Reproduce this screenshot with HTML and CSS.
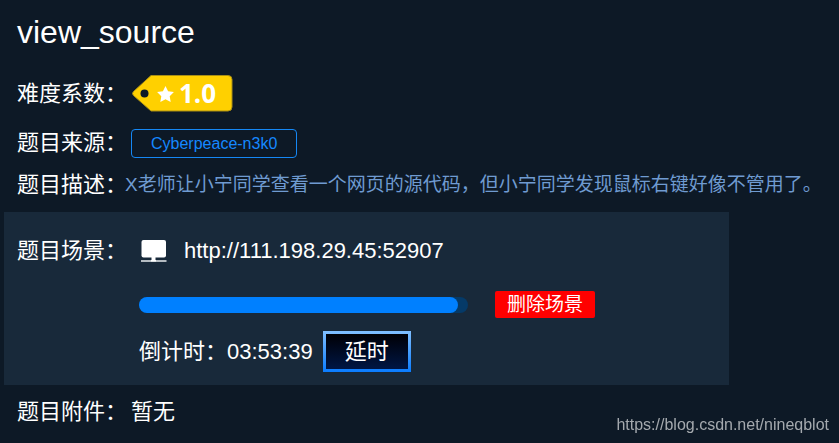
FILE: index.html
```html
<!DOCTYPE html>
<html lang="zh-CN">
<head>
  <meta charset="UTF-8">
  <meta name="viewport" content="width=device-width, initial-scale=1">
  <title>view_source</title>
  <link rel="stylesheet" href="styles.css">
</head>
<body>

  <main class="challenge">
    <h1>view_source</h1>

    <div class="row difficulty">
      <span class="label">难度系数：</span>
      <svg class="tag" viewBox="0 0 102 37" role="img" aria-label="难度 1.0">
        <path fill="#ffd000" stroke="#a88e14" stroke-width="1" d="M20 .5H97a4 4 0 0 1 4 4V32a4 4 0 0 1-4 4H20L2.500 20.500q-2-2 0-4Z"/>
        <circle cx="13.500" cy="18.500" r="4" fill="#0d1926"/>
        <path fill="#fff" d="M34.500 11l2.600 5.300 5.800.8-4.200 4.100 1 5.800-5.200-2.700-5.200 2.700 1-5.800-4.200-4.100 5.800-.8z"/>
        <text class="tag-text" x="48" y="28">1.0</text>
      </svg>
    </div>

    <div class="row source">
      <span class="label">题目来源：</span>
      <a class="author" href="#">Cyberpeace-n3k0</a>
    </div>

    <div class="row">
      <span class="label label-tight">题目描述：</span>
      <p class="description">X老师让小宁同学查看一个网页的源代码，但小宁同学发现鼠标右键好像不管用了。</p>
    </div>

    <section class="scene">
      <span class="label">题目场景：</span>
      <div class="scene-body">
        <div class="address">
          <svg class="monitor" viewBox="0 0 26 22" aria-hidden="true">
            <rect x=".5" y="0" width="24.500" height="17.500" rx="2" fill="#fff"/>
            <rect x="10.500" y="17" width="4" height="4" fill="#fff"/>
            <rect x="0" y="20" width="25.500" height="2" fill="#b4bbc1"/>
            <rect x="10" y="20" width="5" height="1.500" fill="#fff"/>
          </svg>
          <a href="http://111.198.29.45:52907">http://111.198.29.45:52907</a>
        </div>
        <div class="status">
          <div class="bar" role="progressbar" aria-label="剩余时间" aria-valuenow="97" aria-valuemin="0" aria-valuemax="100">
            <div class="bar-fill" style="width: 97%"></div>
          </div>
          <button type="button" class="delete">删除场景</button>
        </div>
        <div class="timer">
          <span>倒计时：03:53:39</span>
          <button type="button" class="extend">延时</button>
        </div>
      </div>
    </section>

    <div class="row attachment">
      <span class="label">题目附件：</span>
      <span class="none">暂无</span>
    </div>
  </main>

  <footer>https://blog.csdn.net/nineqblot</footer>

</body>
</html>
```

FILE: styles.css
```css
* {
  box-sizing: border-box;
}

body {
  margin: 0;
  background: #0d1926;
  color: #fff;
  font-family: "Liberation Sans", "Noto Sans CJK SC", sans-serif;
  font-size: 22px;
  line-height: 30px;
}

a {
  color: inherit;
  text-decoration: none;
}

button {
  margin: 0;
  padding: 0;
  color: #fff;
  font-family: inherit;
  cursor: pointer;
}

.challenge {
  padding-top: 12px;
}

h1 {
  margin: 0 0 23px;
  padding-left: 17px;
  font-size: 32px;
  font-weight: normal;
  line-height: 40px;
}

.row {
  display: flex;
  align-items: center;
  padding-left: 17px;
}

.label {
  flex: none;
  width: 114px;
  white-space: nowrap;
}

.label-tight {
  width: 108px;
}

.difficulty {
  margin-bottom: 16px;
}

.tag {
  width: 102px;
  height: 37px;
}

.tag-text {
  fill: #fff;
  font-family: "Open Sans", sans-serif;
  font-size: 26px;
  font-weight: bold;
}

.source {
  margin-bottom: 12px;
}

.author {
  padding: 0 19px;
  border: 1px solid #1588f5;
  border-radius: 4px;
  color: #1588ff;
  font-size: 16px;
  line-height: 27px;
}

.description {
  margin: 0;
  color: #6f9bd1;
  font-size: 19px;
}

.scene {
  display: flex;
  max-width: 725px;
  margin: 12px 0 12px 4px;
  padding: 24px 13px 13px;
  background: #18293a;
}

.scene-body {
  flex: 1;
  padding-left: 8px;
}

.address {
  display: flex;
  align-items: center;
  gap: 17px;
  padding-left: 2px;
}

.monitor {
  width: 26px;
  height: 22px;
}

.status {
  display: flex;
  align-items: center;
  gap: 27px;
  margin: 25px 0 13px;
}

.bar {
  width: 329px;
  height: 16px;
  border-radius: 8px;
  background: #053a68;
}

.bar-fill {
  height: 100%;
  border-radius: 8px;
  background: #0080ff;
}

.delete {
  width: 100px;
  height: 27px;
  border: 0;
  border-radius: 2px;
  background: #f00;
  font-size: 19px;
  line-height: 27px;
}

.timer {
  display: flex;
  align-items: center;
  gap: 10px;
}

.extend {
  padding: 0 19px;
  border: 3px solid transparent;
  background:
    linear-gradient(#000005, #001644) padding-box,
    linear-gradient(#80bfff, #0a7cff) border-box;
  font-size: 22px;
  line-height: 35px;
}

footer {
  position: fixed;
  right: 10px;
  bottom: 8px;
  color: #a4a9ae;
  font-size: 16px;
  line-height: 20px;
}
```
